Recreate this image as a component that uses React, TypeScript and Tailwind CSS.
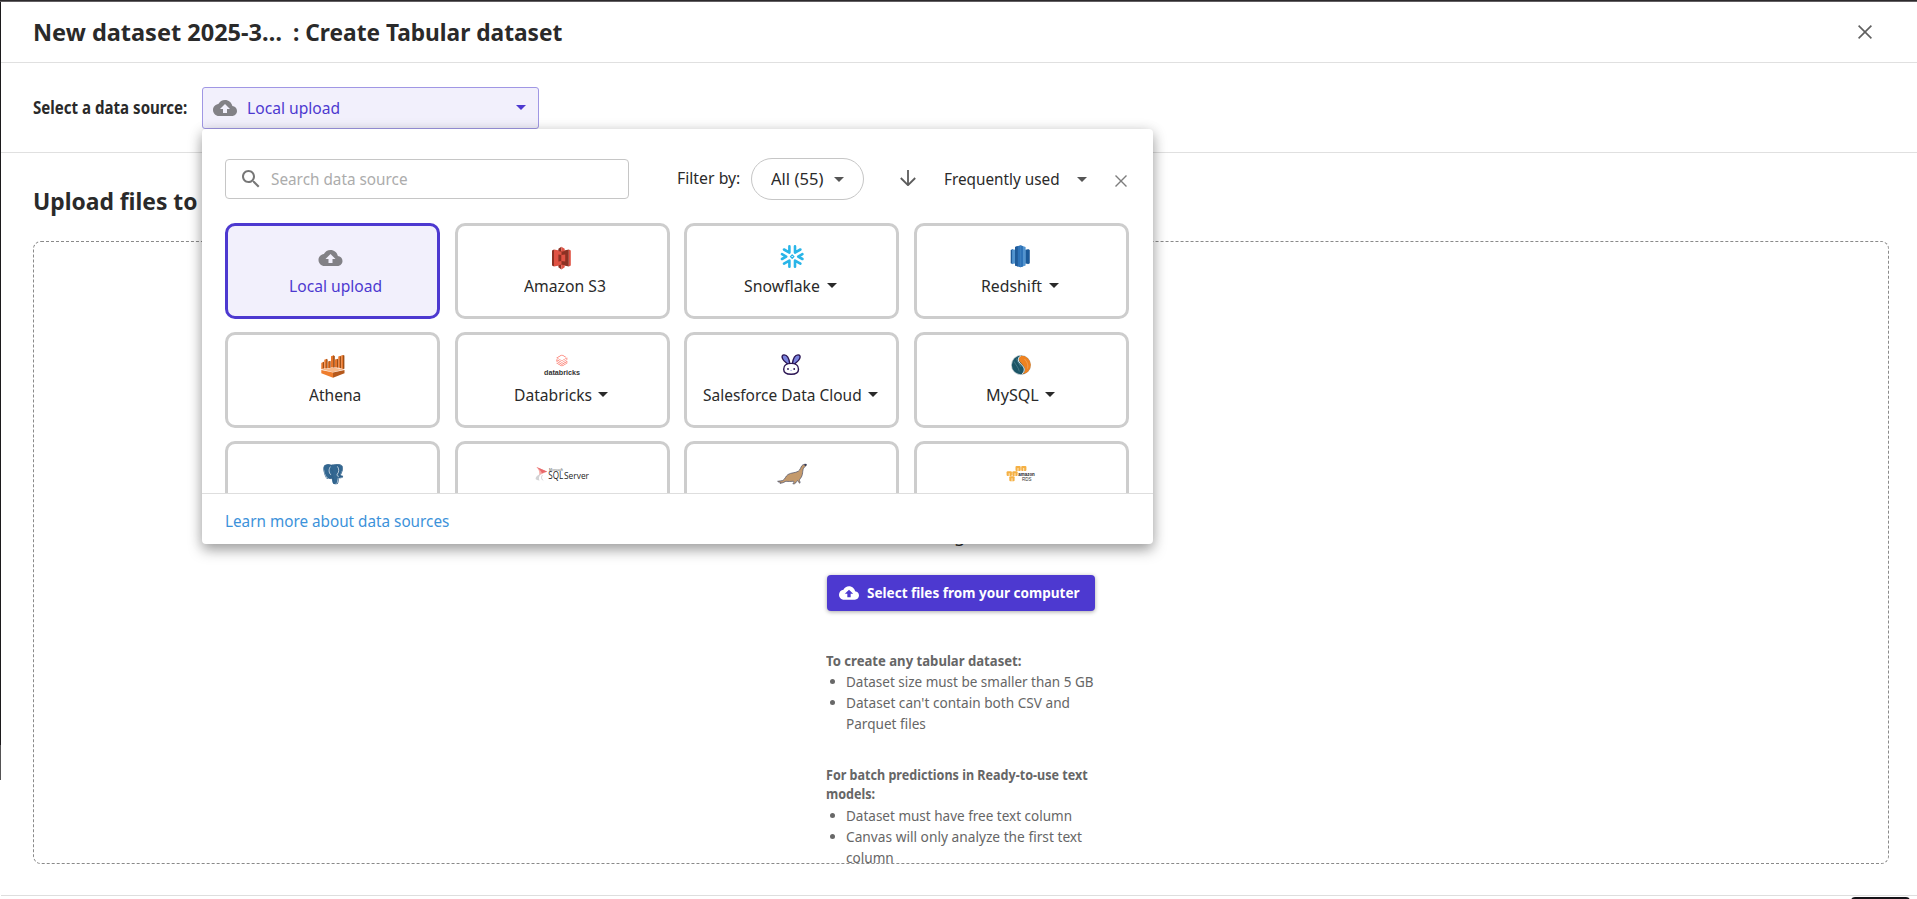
import type { ReactNode } from 'react';
import { SiDatabricks, SiPostgresql } from 'react-icons/si';

const CLOUD =
  'M19.35 10.04C18.67 6.59 15.64 4 12 4 9.11 4 6.6 5.64 5.35 8.04 2.34 8.36 0 10.91 0 14c0 3.31 2.69 6 6 6h13c2.76 0 5-2.24 5-5 0-2.64-2.05-4.78-4.65-4.96zM14 13v4h-4v-4H7l5-5 5 5h-3z';

/* Single-line text set slightly narrower than the font's natural width. */
function Text({ box, scale, children }: { box: string; scale: string; children: ReactNode }) {
  return (
    <span className={`inline-block shrink-0 whitespace-nowrap ${box}`}>
      <span className={`inline-block origin-left ${scale}`}>{children}</span>
    </span>
  );
}

function Cloud({ className }: { className: string }) {
  return (
    <svg viewBox="0 0 24 24" className={className} fill="currentColor">
      <path d={CLOUD} />
    </svg>
  );
}

function Caret({ className }: { className?: string }) {
  return (
    <svg viewBox="0 0 10 5" className={`h-[5px] w-[10px] shrink-0 ${className ?? ''}`} fill="currentColor">
      <path d="M0 0h10L5 5z" />
    </svg>
  );
}

function Cross({ className }: { className: string }) {
  return (
    <svg viewBox="0 0 14 14" className={className} fill="none" stroke="currentColor" strokeWidth="1.6">
      <path d="M.6.6l12.8 12.8M13.4.6L.6 13.4" />
    </svg>
  );
}

function Art({ children }: { children: ReactNode }) {
  return (
    <svg viewBox="0 0 60 28" className="h-[28px] w-[60px] shrink-0">
      {children}
    </svg>
  );
}

const UploadArt = (
  <Art>
    <path d={CLOUD} transform="translate(15.5 1)" fill="#828186" />
  </Art>
);

const S3Art = (
  <Art>
    <path d="M20 5.5l2-1v17l-2-1z" fill="#8c3123" />
    <path d="M22 4.5l8 1.5v14l-8 1.5z" fill="#e05243" />
    <path d="M38.8 5.5l-2-1v17l2-1z" fill="#e05243" />
    <path d="M36.8 4.5L29.5 6v14l7.3 1.5z" fill="#8c3123" />
    <path d="M26.4 9.5l3 .6v5.8l-3 .6z" fill="#8c3123" />
    <path d="M29.4 10.1l3.8-.6v7l-3.8-.6z" fill="#e05243" />
    <path d="M26.4 3.8l3-2v5l-3-.7zM26.4 22.2l3 2.3v-5l-3 .7z" fill="#8c3123" />
    <path d="M29.4 1.8l3.3 2v2.3l-3.3.7zM29.4 24.5l3.3-2.3v-2l-3.3-.7z" fill="#e05243" />
  </Art>
);

const SnowflakeArt = (
  <Art>
    <g fill="none" stroke="#29b5e8" strokeWidth="2.6" strokeLinecap="round" strokeLinejoin="round">
      <path d="M27.4 1.4v6.200l-5.400-3.100M33 1.400v6.200l5.400-3.100" />
      <path d="M27.4 21.800v-6.200l-5.400 3.100M33 21.800v-6.200l5.400 3.100" />
      <path d="M20 9.200l4.200 2.400-4.200 2.400M40.400 9.200l-4.200 2.400 4.200 2.400" />
    </g>
    <path d="M30.200 9.900l1.700 1.700-1.700 1.700-1.700-1.700z" fill="none" stroke="#29b5e8" strokeWidth="1.300" strokeLinejoin="round" />
  </Art>
);

const RedshiftArt = (
  <Art>
    <path d="M19.7 5l2.2-1v15.2l-2.2-1z" fill="#205b99" />
    <path d="M21.2 4.2l3 .5v13.7l-3 .6z" fill="#5294cf" />
    <path d="M38.8 5l-2-1v15.2l2-1z" fill="#205b99" />
    <path d="M37.4 4.2l-3.2.5v13.7l3.2.6z" fill="#1a5a99" />
    <path d="M24 2l5.4-1.7v21.9L24 20.6z" fill="#2e73b8" />
    <path d="M24 2l2.8-.9v20.3l-2.8-.8z" fill="#205b99" />
    <path d="M34.6 2l-5.2-1.7v21.9l5.2-1.6z" fill="#5294cf" />
    <path d="M32 1.2l-2.8-.9v21.9l2.8-.8z" fill="#2e73b8" />
  </Art>
);

const AthenaArt = (
  <Art>
    <path d="M18.3 9l2.2-1.2V14.6l-2.2.6zM21.3 5.8l2.8-1V14.500h-2.800zM24.900 7.500l2.400-.8V14h-2.400zM28 2.200l3-1V13.500h-3zM32 5.500l2.800-.8V13.500H32zM35.300 2.600l2.400-.8V14l-2.400-.3zM38.200 1.600l1.800-.6v14l-1.800-.5z" fill="#e8762a" />
    <path d="M20 7.8l1 .4V14.500h-1zM23.300 5l1.300.4V14.300h-1.300zM26.400 6.900l1.200.3V13.800h-1.200zM30.200 1.400l1.600.6V13.500h-1.600zM34 4.900l1.200.4V13.500H34zM37 2l1 .4v11.800h-1zM40 1l1.400.5v13.300L40 15z" fill="#9d4f18" />
    <path d="M18.3 15.2l12-1.4 11.2 1.4-11.5 3z" fill="#f8b98a" />
    <path d="M18.3 16l11.7 2.6v5.2l-11.7-4.6z" fill="#ee7d2d" />
    <path d="M41.5 16L30 18.6v5.2l11.5-4.6z" fill="#b5591c" />
  </Art>
);

const DatabricksArt = (
  <Art>
    <SiDatabricks x={24} y={0.6} size={11.8} color="#fb6a5c" />
    <text x="12" y="20.8" textLength="36" lengthAdjust="spacingAndGlyphs" className="font-['Liberation_Sans'] text-[7.4px] font-bold" fill="#333">
      databricks
    </text>
  </Art>
);

const SalesforceArt = (
  <Art>
    <g stroke="#2a1452" strokeWidth="1.4" strokeLinejoin="round">
      <path d="M26.4 10.6C25 9 22 7.8 20.6 4.8 19.3 2 20.6.8 22.2.9c3.4.2 5 4 5.6 9z" fill="#7b84de" />
      <path d="M31.8 10.6c1.4-1.6 4.4-2.8 5.8-5.8C38.9 2 37.6.8 36 .9c-3.4.2-5 4-5.6 9z" fill="#7b84de" />
      <path d="M29.1 9.4c4.9 0 7.4 2.2 7.4 5.8s-2.6 5.1-7.4 5.1-7.4-1.5-7.4-5.1 2.5-5.8 7.4-5.8z" fill="#fff" />
    </g>
    <circle cx="26" cy="15" r=".9" fill="#2a1452" />
    <circle cx="32.2" cy="15" r=".9" fill="#2a1452" />
    <circle cx="29.1" cy="16.4" r=".6" fill="#8d9ae0" />
  </Art>
);

const MySqlArt = (
  <Art>
    <circle cx="30" cy="11" r="10" fill="#b9c7cc" />
    <circle cx="30" cy="11" r="9.2" fill="#1b5566" />
    <path d="M30.1 1.8c-2.6 1.5-2.8 4.2-.8 6.4 2.4 2.8 5.2 5 4.6 8-.3 1.6-1.4 2.8-2.8 4A9.2 9.2 0 0 0 30.1 1.8z" fill="#ef8220" />
    <path d="M29.7 1.9c-3 1.8-3 4.7-1 7 2.4 2.6 5 4.4 4.5 7.4-.2 1.6-1.2 2.8-2.4 3.9" fill="none" stroke="#fff" strokeWidth="1" />
    <path d="M23.1 7.500c1.800 4 4.200 5.200 5.200 10M25.500 4.600c.4 3 3.400 6 4.600 8.400" fill="none" stroke="#5f8a97" strokeWidth=".6" />
    <path d="M33.500 5c2.600 3 4 5.800 3 9.600" fill="none" stroke="#f7b472" strokeWidth=".6" />
  </Art>
);

const PostgresArt = (
  <Art>
    <path d="M21.5 2.6c3-1.6 6-1 8-.6 3-.8 7-1 9.4 1 1.6 2.2-.6 7-1.8 9 1.2.6 2.4.5 3 .8-.6 1.8-3 2.4-5.2 2-.4 3.6-.6 6-3 6.2-2.6 0-2.8-2.6-2.9-5.6-3.6.8-5.6-.4-7-4.6-1-3.2-1.6-6.8-.5-8.2z" fill="#336791" />
    <SiPostgresql x={20} y={1} size={20.5} color="#2f5f88" />
    <path d="M27.4 3.6c-1.8 2.6-1.8 6 .4 8.2M34.4 3.4c1.8 2.4 1.8 5.4 0 7.6-.9 1.2-.2 2 1.4 2.4" fill="none" stroke="#dfe8ef" strokeWidth=".8" />
  </Art>
);

const SqlServerArt = (
  <Art>
    <path d="M4.500 4c2.600 1.400 8 3 10.800 4.800-3.200 1-5.800 2.200-8.400 3.800C8 9.800 7.200 7 4.500 4z" fill="#f7a8a4" />
    <path d="M4.500 4c2.600 1.400 8 3 10.800 4.800-1.800.2-3.600.7-5.300 1.400C9 8 7.200 6 4.500 4z" fill="#e8696b" />
    <path d="M9.500 10.600c-3 1-5.400 2.800-5.900 4.600-.3 1.400 1.800 2.200 4 2.200-1.400-1.600-.6-4.400 1.900-6.800z" fill="#d3d3d5" />
    <path d="M10.6 12c-1.4 1.6-1.6 4 .6 5.4" fill="none" stroke="#bdbdc0" strokeWidth=".7" />
    <text x="17" y="7.6" textLength="14" lengthAdjust="spacingAndGlyphs" className="font-['Open_Sans'] text-[4px]" fill="#444">
      Microsoft
    </text>
    <text x="16.3" y="15.6" textLength="15" lengthAdjust="spacingAndGlyphs" className="font-['Open_Sans'] text-[10px] font-medium" fill="#1d1d1d">
      SQL
    </text>
    <text x="32" y="15.6" textLength="25" lengthAdjust="spacingAndGlyphs" className="font-['Open_Sans'] text-[9px] font-medium" fill="#1d1d1d">
      Server
    </text>
  </Art>
);

const SealArt = (
  <Art>
    <path
      d="M44.2 1.3c-1.5-.3-3.3.2-4.3 1.4-1.3 1.7-1.5 4-3.6 5.5-3 1.9-7.2 1.3-10.3 3.3-2.6 1.7-2.7 4.6-5.2 6-1.6.6-3.6.2-5.2.8.6.9 1.8.7 2.7.9-.2.4-.5.8-.3 1.2 2.3-.2 4.2-1.1 5.9-2.1 2.5.2 5 .3 7.5-.1.8.6.4 1.9-.6 2.6.9.2 2.2.1 2.8-.8.6-.9 1-1.9 2-2.4.8.8.9 2.1 2.2 2.6.5-.8.2-1.6-.3-2.4-.3-.9.3-1.6.9-2.3 1.3-1.6 2-3.6 2.2-5.7.2-2.1.4-4.3 1.8-5.7.7-.7 2-.7 1.800-2.800z"
      fill="#c49a6c"
      stroke="#4a4f66"
      strokeWidth=".7"
    />
    <path d="M42.3 1.2l2.3-.2-.5 1.7-1.3.4z" fill="#2b3350" />
  </Art>
);

const RdsArt = (
  <Art>
    <g fill="#f5b043">
      <rect x="24.5" y="3" width="5.2" height="5" rx="1" />
      <rect x="30.2" y="3" width="5.2" height="5" rx="1" />
      <rect x="15.6" y="8.2" width="5.3" height="4.9" rx="1" />
      <rect x="21.3" y="8.2" width="5.3" height="4.9" rx="1" />
      <rect x="18.3" y="13.3" width="5.3" height="4.9" rx="1" />
    </g>
    <path d="M27 5v3M32.7 5v3M18.2 10.2V13M24 10.2V13M21 15.2v3" stroke="#fff" strokeWidth=".7" />
    <text x="27.3" y="12.7" textLength="16.5" lengthAdjust="spacingAndGlyphs" className="font-['Liberation_Sans'] text-[5px] font-bold" fill="#222">
      amazon
    </text>
    <text x="31" y="18" textLength="9.5" lengthAdjust="spacingAndGlyphs" className="font-['Liberation_Sans'] text-[5px]" fill="#333">
      RDS
    </text>
  </Art>
);

type Source = { id: string; name?: string; art: ReactNode; box?: string; scale?: string; menu?: boolean; active?: boolean };

const sources: Source[] = [
  { id: 'local', name: 'Local upload', art: UploadArt, box: 'w-[92px]', scale: 'scale-x-[0.92]', active: true },
  { id: 's3', name: 'Amazon S3', art: S3Art, box: 'w-[82px]', scale: 'scale-x-[0.925]' },
  { id: 'snowflake', name: 'Snowflake', art: SnowflakeArt, box: 'w-[77px]', scale: 'scale-x-[0.93]', menu: true },
  { id: 'redshift', name: 'Redshift', art: RedshiftArt, box: 'w-[62px]', scale: 'scale-x-[0.93]', menu: true },
  { id: 'athena', name: 'Athena', art: AthenaArt, box: 'w-[52px]', scale: 'scale-x-[0.915]' },
  { id: 'databricks', name: 'Databricks', art: DatabricksArt, box: 'w-[78px]', scale: 'scale-x-[0.92]', menu: true },
  { id: 'salesforce', name: 'Salesforce Data Cloud', art: SalesforceArt, box: 'w-[159px]', scale: 'scale-x-[0.91]', menu: true },
  { id: 'mysql', name: 'MySQL', art: MySqlArt, box: 'w-[53px]', scale: 'scale-x-[0.95]', menu: true },
  { id: 'postgresql', art: PostgresArt },
  { id: 'sqlserver', art: SqlServerArt },
  { id: 'mariadb', art: SealArt },
  { id: 'rds', art: RdsArt },
];

function SourceCard({ s }: { s: Source }) {
  return (
    <div
      className={`flex h-24 w-[215px] flex-col items-center rounded-[10px] border-[3px] pt-[19px] ${
        s.active ? 'border-[#4d39d0] bg-[#f2f0fc] text-[#4d39d0]' : 'border-[#cdcdcd] bg-white text-[#2a2a2a]'
      }`}
    >
      {s.art}
      {s.name && (
        <div className={`flex items-center gap-1.5 pt-px leading-6 ${s.menu ? 'pr-0.5' : 'pl-[5px]'}`}>
          <Text box={s.box ?? ''} scale={s.scale ?? ''}>
            {s.name}
          </Text>
          {s.menu && <Caret />}
        </div>
      )}
    </div>
  );
}

function SourcePanel() {
  return (
    <div className="absolute left-0 top-[42px] z-10 flex h-[415px] w-[951px] flex-col rounded-[4px] bg-white shadow-[0_6px_14px_rgba(0,0,0,0.34),0_1px_14px_rgba(0,0,0,0.10)]">
      <div className="flex h-[94px] shrink-0 items-center pl-[23px] pt-[7px]">
        <div className="-mt-px flex h-10 w-[404px] items-center rounded-[4px] border border-[#c6c6c6] pl-[13px] text-[#acacac]">
          <svg viewBox="0 0 24 24" className="size-6 text-[#777]" fill="currentColor">
            <path d="M15.5 14h-.79l-.28-.27C15.41 12.59 16 11.11 16 9.5 16 5.91 13.09 3 9.5 3S3 5.91 3 9.5 5.91 16 9.5 16c1.61 0 3.09-.59 4.23-1.57l.27.28v.79l5 4.99L20.49 19l-4.99-5zm-6 0C7.01 14 5 11.99 5 9.5S7.01 5 9.5 5 14 7.01 14 9.5 11.99 14 9.5 14z" />
          </svg>
          <span className="pl-2">
            <Text box="w-[138px]" scale="scale-x-[0.9]">
              Search data source
            </Text>
          </span>
        </div>
        <span className="-mt-0.5 ml-12 text-[#2a2a2a]">
          <Text box="w-[74px]" scale="scale-x-[0.93]">
            Filter by:
          </Text>
        </span>
        <div className="flex h-[42px] w-[113px] items-center rounded-full border border-[#c6c6c6] pl-[19px] text-[#2a2a2a]">
          <Text box="w-[63px]" scale="scale-x-[0.975]">
            All (55)
          </Text>
          <Caret className="text-[#555]" />
        </div>
        <svg viewBox="0 0 16 16" className="-mt-0.5 ml-9 size-4" fill="none" stroke="#5c5c5c" strokeWidth="1.8">
          <path d="M8 0v14.8M.8 8L8 15.2 15.2 8" />
        </svg>
        <span className="ml-7 text-[#2a2a2a]">
          <Text box="w-[133px]" scale="scale-x-[0.9]">
            Frequently used
          </Text>
        </span>
        <Caret className="text-[#555]" />
        <Cross className="ml-7 mt-[3px] size-3 text-[#7d7d7d]" />
      </div>
      <div className="min-h-0 flex-1 overflow-hidden px-[23px]">
        <div className="grid w-[904px] grid-cols-[repeat(4,215px)] justify-between gap-y-[13px]">
          {sources.map((s) => (
            <SourceCard key={s.id} s={s} />
          ))}
        </div>
      </div>
      <div className="flex h-[51px] shrink-0 items-center border-t border-[#dedede] pl-[23px] pt-1 text-[#3c92da]">
        <Text box="w-[226px]" scale="scale-x-[0.898]">
          Learn more about data sources
        </Text>
      </div>
    </div>
  );
}

function Bullet({ children }: { children: ReactNode }) {
  return (
    <li className="flex">
      <span className="ml-[3.5px] mr-[11.5px] mt-[8px] size-[5px] shrink-0 rounded-full bg-[#686868]" />
      <div className="flex flex-col">{children}</div>
    </li>
  );
}

export default function App() {
  return (
    <div className="flex h-[899px] w-full flex-col overflow-hidden bg-white font-['Noto_Sans',sans-serif] text-[17px] text-[#2a2a2a]">
      <div className="h-px shrink-0 bg-[#2c2a2c]" />
      <div className="h-px shrink-0 bg-[#625f62]" />
      <div className="flex min-h-0 flex-1">
        <div className="flex w-px shrink-0 flex-col">
          <div className="h-[743px] bg-[#1c1a1c]" />
          <div className="h-[35px] bg-[#555355]" />
        </div>
        <div className="flex min-w-0 flex-1 flex-col">
          <header className="flex h-[61px] shrink-0 items-center justify-between border-b border-[#e0e0e0] pl-8 pr-[45px] text-[23px] font-bold leading-8">
            <h1 className="flex">
              <Text box="w-[260px]" scale="scale-x-[1.022]">
                New dataset 2025-3…
              </Text>
              <Text box="w-[269px]" scale="scale-x-[0.986]">
                : Create Tabular dataset
              </Text>
            </h1>
            <Cross className="size-[14px] text-[#5f5f5f]" />
          </header>

          <section className="flex h-[90px] shrink-0 items-center border-b border-[#e0e0e0] pl-8">
            <span className="font-bold">
              <Text box="w-[169px]" scale="scale-x-[0.887]">
                Select a data source:
              </Text>
            </span>
            <div className="relative">
              <div className="flex h-[42px] w-[337px] items-center rounded-[3px] border border-[#a097e4] bg-[#f2f0fc] pl-2.5 text-[#4d39d0]">
                <Cloud className="size-6 text-[#828186]" />
                <span className="flex-1 pl-2.5">
                  <Text box="w-[93px]" scale="scale-x-[0.92]">
                    Local upload
                  </Text>
                </span>
                <Caret className="mr-3" />
              </div>
              <SourcePanel />
            </div>
          </section>

          <main className="flex min-h-0 flex-1 flex-col pl-8 pr-7 pt-8">
            <h2 className="text-[23px] font-bold leading-8">
              <Text box="w-[166px]" scale="scale-x-[0.993]">
                Upload files to
              </Text>
            </h2>
            <div className="mt-6 flex h-[623px] shrink-0 flex-col items-center overflow-hidden rounded-[8px] border border-dashed border-[#8a8a8a]">
              <div className="mt-[280px] h-[26px] pl-0.5 text-center text-[18px] leading-[26px] text-[#2a2a2a]">g,</div>
              <div className="mt-[27px] flex h-9 w-[268px] shrink-0 items-center rounded-[4px] bg-[#4d39d0] pl-3 text-[14.5px] font-bold text-white shadow-[0_1px_4px_rgba(0,0,0,0.35)]">
                <Cloud className="size-5" />
                <span className="pl-2">
                  <Text box="w-[213px]" scale="scale-x-[0.934]">
                    Select files from your computer
                  </Text>
                </span>
              </div>

              <div className="mt-[39px] w-[270px] text-[14px] leading-[21px] text-[#666]">
                <p className="font-bold">
                  <Text box="w-[196px]" scale="scale-x-[0.937]">
                    To create any tabular dataset:
                  </Text>
                </p>
                <ul>
                  <Bullet>
                    <Text box="w-[249px]" scale="scale-x-[0.963]">
                      Dataset size must be smaller than 5 GB
                    </Text>
                  </Bullet>
                  <Bullet>
                    <Text box="w-[249px]" scale="scale-x-[0.974]">
                      Dataset can't contain both CSV and
                    </Text>
                    <Text box="w-[249px]" scale="scale-x-[0.97]">
                      Parquet files
                    </Text>
                  </Bullet>
                </ul>
                <p className="mt-8 flex flex-col pb-px text-[13.5px] font-bold leading-[19px]">
                  <Text box="w-[262px]" scale="scale-x-[0.93]">
                    For batch predictions in Ready-to-use text
                  </Text>
                  <Text box="w-[262px]" scale="scale-x-[0.93]">
                    models:
                  </Text>
                </p>
                <ul>
                  <Bullet>
                    <Text box="w-[249px]" scale="scale-x-[0.965]">
                      Dataset must have free text column
                    </Text>
                  </Bullet>
                  <Bullet>
                    <Text box="w-[249px]" scale="scale-x-[0.98]">
                      Canvas will only analyze the first text
                    </Text>
                    <Text box="w-[249px]" scale="scale-x-[0.97]">
                      column
                    </Text>
                  </Bullet>
                </ul>
              </div>
            </div>
          </main>

          <footer className="flex h-[4px] shrink-0 justify-end overflow-hidden border-t border-[#dedede] pr-[7px] pt-px">
            <div className="h-9 w-[59px] shrink-0 rounded-[4px] bg-[#151318]" />
          </footer>
        </div>
      </div>
    </div>
  );
}
